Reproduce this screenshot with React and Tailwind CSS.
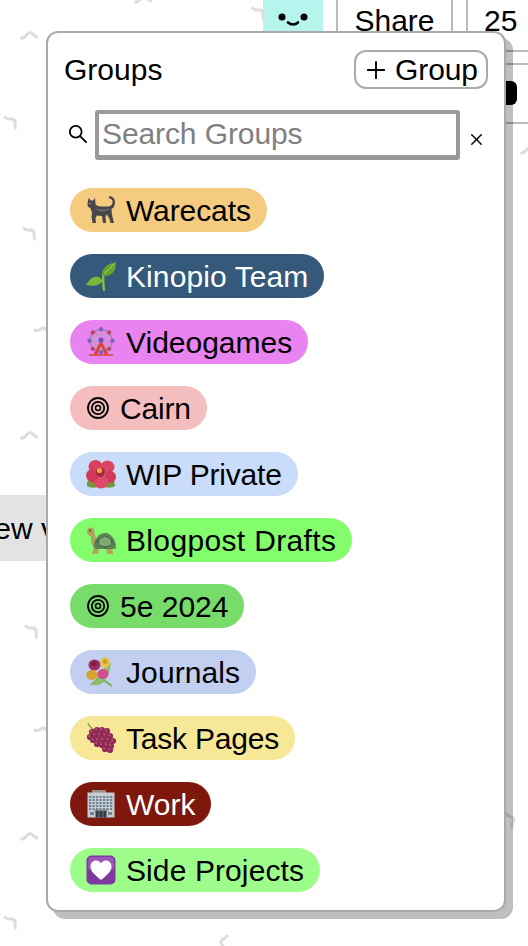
import React from 'react';
import { Plus, X } from 'lucide-react';

const Cat = () => (
  <svg viewBox="0 0 30 30" className="w-[30px] h-[30px] shrink-0">
    <path d="M1.500 9L2.500 3L5 5.500L7 5.500L9 3L9.500 9C11 11.500 14 11.500 17 11.500L21 11.500C25 11.500 27 9.500 26.500 6C26 4 24 3.500 23 3C22 2 23 1 24.500 1.300C27.500 2 29.500 5 29 8.500C28.500 11.500 27 13.500 25.500 14C25.500 17 26 20 27 24L28 28L24.500 28L23.500 24L21 19.500L19.500 21L20 28L17 28L16 21L11 20.500L9.500 23L10 28L6.500 28L5.500 22L6 17C5 15.500 4.500 14.500 4.500 13C2.500 12.500 1 11 1.500 9Z" fill="#47474b" />
    <path d="M9 13c4 2 10 2 15 0-1 4-12 5-15 0z" fill="#6f6f74" />
    <circle cx="4" cy="8.500" r=".7" fill="#c9c46a" />
  </svg>
);

const Seedling = () => (
  <svg viewBox="0 0 30 30" className="w-[30px] h-[30px] shrink-0">
    <path d="M18 29c-.8-5-1-11-.6-16" stroke="#86bd45" strokeWidth="2.400" fill="none" strokeLinecap="round" />
    <path d="M16.500 15C15 8 20 3 30 1c0 8-3 15-13.500 14z" fill="#63a530" />
    <path d="M16.500 20C13 13 6 14 0 24c6 1.500 13 1.500 16.500-4z" fill="#79b93a" />
    <path d="M18.500 12c3-2 6-5 9-9" stroke="#a5d65a" strokeWidth="1" fill="none" />
  </svg>
);

const wheelSpokes = [0, 45, 90, 135, 180, 225, 270, 315];

const FerrisWheel = () => (
  <svg viewBox="0 0 30 30" className="w-[30px] h-[30px] shrink-0">
    <circle cx="15" cy="13.700" r="11" fill="none" stroke="#8f8f9c" strokeWidth="1.300" />
    <circle cx="15" cy="13.700" r="7" fill="none" stroke="#b3a3b8" strokeWidth="1" />
    {wheelSpokes.map((deg) => {
      const x = 15 + 11.500 * Math.cos((deg * Math.PI) / 180);
      const y = 13.700 + 11.500 * Math.sin((deg * Math.PI) / 180);
      return (
        <g key={deg}>
          <line x1="15" y1="13.700" x2={x} y2={y} stroke="#a9a9b3" strokeWidth=".8" />
          <circle cx={x} cy={y} r="2.200" fill={deg % 90 === 0 ? '#7d62c4' : '#b9496a'} />
        </g>
      );
    })}
    <path d="M15 13L7.500 27.500H11L15 19L19 27.500H22.500Z" fill="#d8422f" />
    <path d="M3 28h24" stroke="#d8422f" strokeWidth="1.500" />
    <circle cx="15" cy="13" r="2.600" fill="#6a52c0" />
  </svg>
);

const Target = () => (
  <svg viewBox="0 0 24 24" className="w-[24px] h-[24px] shrink-0">
    <circle cx="12" cy="12" r="10" fill="none" stroke="black" strokeWidth="1.800" />
    <circle cx="12" cy="12" r="6.200" fill="none" stroke="black" strokeWidth="1.800" />
    <circle cx="12" cy="12" r="2.500" fill="none" stroke="black" strokeWidth="1.500" />
  </svg>
);

const Hibiscus = () => (
  <svg viewBox="0 0 30 30" className="w-[30px] h-[30px] shrink-0">
    <path d="M1 27c-1-5 3-8 7-6l3 7c-3 1-7 1-10-1zM29 27c0-5-3-8-7-6l-3 7c3 1 7 1 10-1z" fill="#6d9b3d" />
    <ellipse cx="9.500" cy="7.500" rx="7" ry="6.500" fill="#d93f5f" />
    <ellipse cx="21.500" cy="8" rx="7" ry="6.500" fill="#dc4464" />
    <ellipse cx="24" cy="18" rx="6" ry="6" fill="#d03a58" />
    <ellipse cx="15" cy="23" rx="7.500" ry="6.500" fill="#de4a68" />
    <ellipse cx="6.500" cy="16.500" rx="6.500" ry="6.500" fill="#cf3856" />
    <circle cx="14.500" cy="13.500" r="4.500" fill="#a8263f" />
    <circle cx="13.500" cy="11.500" r="2.600" fill="#e8a83a" />
  </svg>
);

const Turtle = () => (
  <svg viewBox="0 0 30 30" className="w-[30px] h-[30px] shrink-0">
    <path d="M8 22l-2 7h6l1-6zM20 23l1 6h6l-1-7z" fill="#b8a35a" />
    <path d="M1 6c0-4 6-5 7-1 1 3 1 8 3 11l-3 7C5 19 5 14 5 11 3 11 1 9 1 6z" fill="#b0a25a" />
    <path d="M8 21c0-7 5-13 11-13s11 7 11 14c0 1-1 2-2 2H10c-1 0-2-1-2-3z" fill="#5e8456" />
    <path d="M13 14l6-3 6 3 1 6-7 2-7-2zM13 14l-4 5M25 14l3 6M19 22v2" fill="#80a672" stroke="#3f5f3e" strokeWidth=".9" />
    <circle cx="4" cy="5.500" r=".9" fill="#2b2b1e" />
  </svg>
);

const Bouquet = () => (
  <svg viewBox="0 0 30 30" className="w-[30px] h-[30px] shrink-0">
    <path d="M12 19l14 10M14 20L5 28M15 18l9-11" stroke="#79ad58" strokeWidth="2" fill="none" />
    <path d="M5 27c3-4 9-6 15-5-2 5-10 8-15 5z" fill="#8dbd6a" />
    <path d="M17 10l8-4-2 11z" fill="#8dbd6a" />
    <ellipse cx="8.500" cy="8" rx="6" ry="5.500" fill="#9c2f60" />
    <ellipse cx="8" cy="7" rx="3" ry="2.500" fill="#7a2049" />
    <ellipse cx="19" cy="5.500" rx="4.800" ry="5.500" fill="#e7c34b" />
    <ellipse cx="19" cy="4.500" rx="2.300" ry="2.500" fill="#c99e2c" />
    <ellipse cx="6" cy="18" rx="5.800" ry="5" fill="#d8a233" />
    <ellipse cx="17" cy="17" rx="5.500" ry="5" fill="#d14f8f" />
  </svg>
);

const grapes = [
  [6, 9], [11, 7], [16, 7], [21, 8], [4, 14], [9, 12], [14, 12], [19, 12], [24, 13], [7, 17],
  [12, 17], [17, 17], [22, 17], [27, 18], [11, 21], [16, 22], [21, 22], [25, 23], [19, 26], [24, 27],
];

const Grapes = () => (
  <svg viewBox="0 0 30 30" className="w-[30px] h-[30px] shrink-0">
    <path d="M2 0c1 3 3 5 6 7l4-2" stroke="#7da84e" strokeWidth="1.300" fill="none" />
    {grapes.map(([x, y]) => (
      <g key={`${x}-${y}`}>
        <circle cx={x} cy={y} r="3.100" fill="#8e2a55" />
        <circle cx={x - 0.8} cy={y - 0.8} r="1" fill="#b85a80" />
      </g>
    ))}
  </svg>
);

const officeCols = [4, 7.500, 11, 14.500, 18, 21.500, 25];
const officeRows = [7, 10, 13, 16, 19];

const Office = () => (
  <svg viewBox="0 0 30 30" className="w-[30px] h-[30px] shrink-0">
    <rect x="6" y="1" width="14" height="3" fill="#9d8f86" />
    <rect x="1.500" y="3.500" width="27" height="25" fill="#c6ccd1" />
    {officeRows.map((y) =>
      officeCols.map((x) => <rect key={`${x}-${y}`} x={x - 1} y={y} width="2.200" height="2" fill="#6d8294" />),
    )}
    <rect x="4" y="23" width="4" height="3" fill="#6d8294" />
    <rect x="22" y="23" width="4" height="3" fill="#6d8294" />
    <rect x="9.500" y="22" width="11" height="6.500" fill="#2f3b45" />
    <path d="M13 22v6.500M17 22v6.500" stroke="#7b8b97" strokeWidth=".8" />
    <rect x="8.500" y="20.800" width="13" height="1.400" fill="#857a72" />
  </svg>
);

const HeartBox = () => (
  <svg viewBox="0 0 30 30" className="w-[30px] h-[30px] shrink-0">
    <rect x="0.500" y="0.500" width="29" height="29" rx="5" fill="#7f389e" />
    <rect x="2" y="2" width="26" height="13" rx="4" fill="#9a55b6" />
    <path d="M15 25C9 20 4.500 16.500 4.500 11.500 4.500 8 7 5.500 10 5.500c2.200 0 4 1.200 5 3 1-1.800 2.800-3 5-3 3 0 5.500 2.500 5.500 6 0 5-4.500 8.500-10.500 13.500z" fill="white" />
  </svg>
);

const groups = [
  { name: 'Warecats', pill: 'bg-[#f5cc7f] text-black', track: 'tracking-[-0.1px]', Icon: Cat },
  { name: 'Kinopio Team', pill: 'bg-[#34597b] text-white', track: 'tracking-[0.1px]', Icon: Seedling },
  { name: 'Videogames', pill: 'bg-[#e883ef] text-black', track: '', Icon: FerrisWheel },
  { name: 'Cairn', pill: 'bg-[#f5bebe] text-black', track: 'tracking-[-0.2px]', Icon: Target },
  { name: 'WIP Private', pill: 'bg-[#c9dcf9] text-black', track: 'tracking-[-0.2px]', Icon: Hibiscus },
  { name: 'Blogpost Drafts', pill: 'bg-[#84fd6d] text-black', track: 'tracking-[0.35px]', Icon: Turtle },
  { name: '5e 2024', pill: 'bg-[#78dc6a] text-black', track: '', Icon: Target },
  { name: 'Journals', pill: 'bg-[#c2cff0] text-black', track: 'tracking-[0.1px]', Icon: Bouquet },
  { name: 'Task Pages', pill: 'bg-[#f6e896] text-black', track: 'tracking-[-0.2px]', Icon: Grapes },
  { name: 'Work', pill: 'bg-[#7f180c] text-white', track: '', Icon: Office },
  { name: 'Side Projects', pill: 'bg-[#9efd8a] text-black', track: 'tracking-[0.1px]', Icon: HeartBox },
];

// little connector marks scattered over the canvas
const squiggles = [
  { x: 20, y: 30, r: 0 },
  { x: 3, y: 116, r: 50 },
  { x: 251, y: 7, r: 50 },
  { x: 134, y: -6, r: 0 },
  { x: 22, y: 227, r: 50 },
  { x: 34, y: 325, r: 20 },
  { x: 20, y: 430, r: 0 },
  { x: 24, y: 625, r: 50 },
  { x: 34, y: 725, r: 20 },
  { x: 20, y: 831, r: 0 },
  { x: 3, y: 916, r: 50 },
  { x: 214, y: 938, r: -75 },
  { x: 502, y: 814, r: 70 },
  { x: 520, y: 145, r: 0 },
];

const Squiggle = ({ x, y, r }) => (
  <svg
    viewBox="0 0 18 10"
    className="absolute w-[18px] h-[10px]"
    style={{ left: x, top: y, transform: `rotate(${r}deg)` }}
  >
    <path d="M1.500 8C4 8 5 7 6.500 5C8 3 10 2 12 3.500C13.500 5 15 6.500 17 7" stroke="#dddddd" strokeWidth="3" fill="none" strokeLinecap="round" />
  </svg>
);

const GroupPill = ({ group }) => {
  const Icon = group.Icon;
  return (
    <div className={`self-start h-[44px] rounded-[22px] px-4 flex items-center gap-2.5 ${group.pill}`}>
      <Icon />
      <span className={`leading-none pt-[2px] ${group.track}`}>{group.name}</span>
    </div>
  );
};

export default function App() {
  return (
    <div className="relative w-[528px] h-[946px] overflow-hidden bg-white text-[30px] text-black font-['Liberation_Sans',Arial,sans-serif]">
      {squiggles.map((s) => (
        <Squiggle key={`${s.x}-${s.y}`} {...s} />
      ))}

      {/* header toolbar behind the popover */}
      <div className="flex items-start pl-[263px] h-[32px]">
        <div className="w-[60px] h-[32px] bg-[#b5f5ee] flex justify-center">
          <svg viewBox="0 0 30 14" className="w-[30px] h-[14px] mt-[13px]">
            <circle cx="4" cy="4" r="3.500" fill="black" />
            <circle cx="26" cy="4" r="3.500" fill="black" />
            <path d="M10 9.500c3 2.500 7 2.500 10 0" stroke="black" strokeWidth="2.600" fill="none" strokeLinecap="round" />
          </svg>
        </div>
        <div className="ml-[13px] w-[117px] h-[32px] border-x-2 border-[#bbbbbb] flex justify-center items-start pt-[6px] leading-[30px]">
          Share
        </div>
        <div className="ml-[13px] w-[62px] h-[32px] border-l-2 border-[#bbbbbb] pl-[16px] pt-[6px] leading-[30px]">
          25
        </div>
      </div>

      {/* bits of the sidebar that peek out right of the popover */}
      <div className="absolute left-[505px] top-[50px] w-[23px] h-[2px] bg-[#bbbbbb]" />
      <div className="absolute left-[505px] top-[63px] w-[23px] h-[2px] bg-[#bbbbbb]" />
      <div className="absolute left-[505px] top-[122px] w-[23px] h-[2px] bg-[#bbbbbb]" />
      <div className="absolute left-[505px] top-[81px] w-[12px] h-[24px] bg-black rounded-r-[6px]" />

      {/* card on the canvas */}
      <div className="absolute left-0 top-[495px] w-[60px] h-[66px] bg-[#e3e3e3] flex items-center justify-end pr-[4px] whitespace-nowrap overflow-hidden">
        ew v
      </div>

      {/* groups popover */}
      <div className="absolute left-[46px] top-[31px] w-[460px] h-[881px] bg-white border-2 border-[#aaaaaa] rounded-[12px] shadow-[7px_7px_0_rgba(0,0,0,0.25)] pl-[22px] pr-[16px] pt-[17px]">
        <div className="flex items-center justify-between h-[39px]">
          <span className="-ml-[6px]">Groups</span>
          <button className="h-[39px] w-[134px] border-2 border-[#aaaaaa] rounded-[12px] flex items-center pl-[6px] gap-[5px] leading-none">
            <Plus size={28} strokeWidth={1.6} className="shrink-0" />
            <span className="tracking-[-0.1px]">Group</span>
          </button>
        </div>

        <div className="flex items-center mt-[21px] -ml-[2px] h-[50px]">
          <svg viewBox="0 0 22 22" className="w-[20px] h-[20px] shrink-0 -mt-[2px]">
            <circle cx="8.500" cy="8.500" r="6.500" fill="none" stroke="black" strokeWidth="2" />
            <path d="M13.500 13.500L20.500 20.500" stroke="black" strokeWidth="2" />
          </svg>
          <input
            placeholder="Search Groups"
            className="ml-[7px] w-[365px] h-[50px] border-4 border-b-[5px] border-[#999999] rounded-[3px] pl-[3px] pr-[3px] pb-[1px] tracking-[-0.1px] outline-none placeholder:text-[#808080]"
          />
          <X size={19} strokeWidth={1.8} className="shrink-0 ml-[7px] mt-[8px]" />
        </div>

        <div className="flex flex-col gap-[22px] mt-[28px]">
          {groups.map((group) => (
            <GroupPill key={group.name} group={group} />
          ))}
        </div>
      </div>
    </div>
  );
}
